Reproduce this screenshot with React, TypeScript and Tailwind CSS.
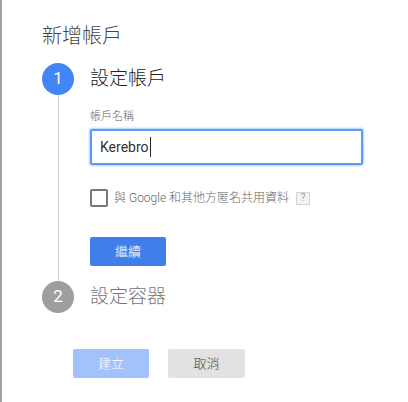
const font = { fontFamily: 'Roboto, "Noto Sans CJK TC", sans-serif' };

function StepCircle({ n, active }: { n: number; active?: boolean }) {
  return (
    <div
      className={
        'flex h-8 w-8 shrink-0 items-center justify-center rounded-full text-[17px] font-normal text-white ' +
        (active ? 'bg-[#4285f4]' : 'bg-[#9e9e9e]')
      }
    >
      {n}
    </div>
  );
}

export default function App() {
  return (
    <div
      className="h-[402px] w-[408px] overflow-hidden border-l-2 border-[#a0a0a0] bg-white pl-[40px] font-light"
      style={font}
    >
      <h1 className="pt-[24px] text-[20px] leading-6 text-[#444]">新增帳戶</h1>

      {/* step 1 */}
      <div className="mt-[15px] flex">
        <div className="flex w-8 flex-col items-center">
          <StepCircle n={1} active />
          <div className="w-px flex-1 bg-[#cfcfcf]" />
        </div>
        <div className="ml-4 pb-[15px]">
          <div className="flex h-8 items-center text-[19px] text-[#212121]">設定帳戶</div>
          <label className="mt-[14px] block text-[11px] leading-4 text-[#666]">帳戶名稱</label>
          <div className="mt-[4px] flex h-[36px] w-[273px] items-center rounded-[2px] border-2 border-[#5a9bf8] px-[8px] shadow-[0_0_2px_1px_rgba(77,144,254,0.45)]">
            <span className="text-[14px] font-normal text-[#333]">Kerebro</span>
            <span className="ml-px h-[20px] w-px bg-[#222]" />
          </div>
          <div className="mt-[24px] flex h-[18px] items-center">
            <span className="h-[18px] w-[18px] rounded-[2px] border-2 border-[#777]" />
            <span className="ml-[6px] text-[12px] text-[#666]">與 Google 和其他方匿名共用資料</span>
            <span className="ml-[7px] flex h-[13px] w-[14px] items-center justify-center border border-[#d5d5d5] bg-[#f3f3f3] text-[10px] leading-none text-[#777]">
              ?
            </span>
          </div>
          <button className="mt-[30px] flex h-[29px] w-[76px] items-center justify-center rounded-[2px] bg-[#3f7fe9] text-[13px] text-white">
            繼續
          </button>
        </div>
      </div>

      {/* step 2 */}
      <div className="flex">
        <StepCircle n={2} />
        <div className="ml-4 flex h-8 items-center text-[19px] text-[#757575]">設定容器</div>
      </div>

      <div className="ml-[31px] mt-[36px] flex gap-[19px]">
        <button className="flex h-[29px] w-[76px] items-center justify-center rounded-[2px] bg-[#a1c2fa] text-[13px] text-white">
          建立
        </button>
        <button className="flex h-[29px] w-[77px] items-center justify-center rounded-[2px] bg-[#e2e2e2] text-[13px] text-[#444]">
          取消
        </button>
      </div>
    </div>
  );
}
